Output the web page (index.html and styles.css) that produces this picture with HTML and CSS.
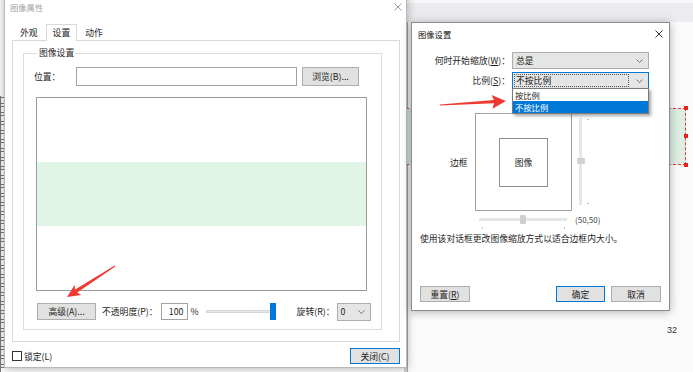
FILE: index.html
```html
<!DOCTYPE html>
<html lang="zh-CN">
<head>
<meta charset="utf-8">
<title>图像属性</title>
<link rel="stylesheet" href="styles.css">
</head>
<body>
<div class="desk">
  <div class="strip"></div>

  <div class="doc">
    <div class="doc-top"></div>
    <div class="doc-page">
      <div class="annot"><i class="hd hd1"></i><i class="hd hd2"></i><i class="hd hd3"></i></div>
      <span class="pno">32</span>
    </div>
  </div>

  <div class="win win-props">
    <div class="titlebar tb-props">
      <span class="ttl ttl-inactive">图像属性</span>
      <svg class="xbtn" width="8" height="8" viewBox="0 0 8 8"><path d="M0.5 0.5L7.5 7.5M7.5 0.5L0.5 7.5" stroke="#9a9a9a" stroke-width="1"/></svg>
    </div>
    <div class="tabs">
      <span class="tab">外观</span>
      <span class="tab sel">设置</span>
      <span class="tab">动作</span>
    </div>
    <div class="panel">
      <div class="group">
        <span class="legend">图像设置</span>
        <div class="row loc">
          <span class="lbl loc-lbl">位置：</span>
          <span class="input wide"></span>
          <span class="btn browse">浏览(B)...</span>
        </div>
        <div class="preview"><div class="band"></div></div>
        <div class="row ctrl">
          <span class="btn adv">高级(A)...</span>
          <span class="lbl op">不透明度(P)：</span>
          <span class="input num">100</span>
          <span class="pct">%</span>
          <span class="slider"><i class="s-track"></i><i class="s-thumb"></i></span>
          <span class="lbl rot">旋转(R)：</span>
          <span class="combo small"><span class="val">0</span><svg width="7" height="4" viewBox="0 0 7 4"><path d="M0.5 0.5L3.5 3.5L6.5 0.5" fill="none" stroke="#777" stroke-width="1"/></svg></span>
        </div>
      </div>
    </div>
    <div class="foot">
      <span class="chk"><i class="box"></i>锁定(L)</span>
      <span class="btn def close">关闭(C)</span>
    </div>
  </div>

  <div class="win win-scale">
    <div class="titlebar tb-scale">
      <span class="ttl">图像设置</span>
      <svg class="xbtn" width="8" height="8" viewBox="0 0 8 8"><path d="M0.5 0.5L7.5 7.5M7.5 0.5L0.5 7.5" stroke="#333" stroke-width="1"/></svg>
    </div>
    <div class="form">
      <span class="flbl">何时开始缩放(<u>W</u>)：</span>
      <span class="combo"><span class="val">总是</span><svg width="7" height="4" viewBox="0 0 7 4"><path d="M0.5 0.5L3.5 3.5L6.5 0.5" fill="none" stroke="#777" stroke-width="1"/></svg></span>
      <span class="flbl">比例(<u>S</u>)：</span>
      <span class="combo focus"><span class="val dotted">不按比例</span><svg width="7" height="4" viewBox="0 0 7 4"><path d="M0.5 0.5L3.5 3.5L6.5 0.5" fill="none" stroke="#777" stroke-width="1"/></svg></span>
    </div>
    <div class="droplist">
      <div class="opt">按比例</div>
      <div class="opt on">不按比例</div>
    </div>
    <div class="frame-row">
      <span class="frame-lbl">边框</span>
      <div class="frame"><div class="image">图像</div></div>
      <div class="vslider"><i class="v-track"></i><i class="v-thumb"></i><i class="v-tick t1"></i><i class="v-tick t2"></i></div>
    </div>
    <div class="hrow">
      <div class="hslider"><i class="h-track"></i><i class="h-thumb"></i><i class="h-tick k1"></i><i class="h-tick k2"></i></div>
      <span class="coord">(50,50)</span>
    </div>
    <p class="desc">使用该对话框更改图像缩放方式以适合边框内大小。</p>
    <div class="btnrow">
      <span class="btn reset">重置(<u>R</u>)</span>
      <span class="spacer"></span>
      <span class="btn def ok">确定</span>
      <span class="btn cancel">取消</span>
    </div>
  </div>

  <svg class="arrows" width="693" height="372" viewBox="0 0 693 372">
    <polygon fill="#ee3a32" points="114.7,265.6 75.2,289.5 74.6,284.9 67,297 81.2,295 77.2,292.5 115.3,266.4"/>
    <polygon fill="#ee3a32" points="440,104.4 493.9,100.1 491.6,94.9 506,101 492.4,108.8 494.1,103.3 440,105.6"/>
  </svg>
</div>
</body>
</html>
```

FILE: styles.css
```css
* { box-sizing: border-box; }

body {
  margin: 0;
  font-family: "Noto Sans CJK SC", "Microsoft YaHei", sans-serif;
  font-size: 8.8px;
  color: #1e1e1e;
}

.desk {
  position: relative;
  width: 693px;
  height: 372px;
  overflow: hidden;
  background: #fff;
}

/* background pieces */
.strip {
  position: absolute;
  left: 0;
  top: 96px;
  bottom: 0;
  width: 4px;
  background:
    linear-gradient(#7a7a7a, #7a7a7a) 0 0 / 1px 100% no-repeat,
    repeating-linear-gradient(to bottom, transparent 0 1px, #7a7a7a 1px 2px, transparent 2px 7px, #7a7a7a 7px 8px, transparent 8px 9px);
}

.doc {
  position: absolute;
  left: 404px;
  top: 0;
  right: 0;
  bottom: 0;
  display: flex;
  flex-direction: column;
  background: #d2d2d2;
}

.doc-top {
  height: 22px;
  background: linear-gradient(#f8f8fa 0 3px, #ececf0 3px);
}

.doc-page {
  position: relative;
  flex: 1;
  margin-left: 3px;
  border-left: 1px solid #a8a8a8;
  background: #fbfbfb;
}

.annot {
  position: absolute;
  left: -2px;
  top: 86px;
  width: 280px;
  height: 57px;
  background: #dcefe1;
  border: 1px dashed #e23a36;
}

.hd {
  position: absolute;
  right: -3px;
  width: 4px;
  height: 4px;
  background: #e8211d;
}
.hd1 { top: -3px; }
.hd2 { top: 25px; }
.hd3 { bottom: -3px; }

.pno {
  position: absolute;
  left: 259px;
  top: 302px;
  font-family: "Liberation Sans", sans-serif;
  font-size: 9px;
  line-height: 12px;
  color: #333;
}

/* windows */
.win {
  position: absolute;
  display: flex;
  flex-direction: column;
  background: #fff;
  border: 1px solid #b9b9b9;
  box-shadow: 0 1px 9px rgba(0, 0, 0, 0.3);
}

.win-props {
  left: 4px;
  top: -6px;
  width: 403px;
  height: 374px;
}

.win-scale {
  left: 411px;
  top: 22px;
  width: 259px;
  height: 289px;
  border-color: #8c8c8c;
}

.titlebar {
  display: flex;
  align-items: center;
  justify-content: space-between;
  flex: none;
}

.tb-props { height: 24px; padding: 0 4px 0 5px; }
.tb-scale { height: 21px; padding: 0 6px 0 6px; }

.ttl { font-size: 8.3px; color: #111; }
.ttl-inactive { color: #a3a3a3; }

.xbtn { display: block; }

/* tabs */
.tabs {
  position: relative;
  z-index: 1;
  height: 21px;
  display: flex;
  align-items: flex-end;
  gap: 2px;
  padding-left: 9px;
  flex: none;
}

.tab {
  height: 14px;
  line-height: 14px;
  padding: 0 6px;
}

.tab.sel {
  height: 17px;
  line-height: 16px;
  margin-bottom: -1px;
  background: #fff;
  border: 1px solid #d9d9d9;
  border-bottom: none;
}

.panel {
  height: 302px;
  margin: 0 6px 0 7px;
  border: 1px solid #d9d9d9;
  flex: none;
}

.group {
  margin: 12px 17px 0 10px;
  padding: 0 0 9px 10px;
  border: 1px solid #dcdcdc;
}

.legend {
  display: block;
  width: fit-content;
  margin: -7px 0 0 3px;
  padding: 0 2px;
  line-height: 12px;
  background: #fff;
}

.row {
  display: flex;
  align-items: center;
}

.loc { margin-top: 8px; height: 19px; }
.loc-lbl { width: 42px; }

.input {
  display: block;
  background: #fff;
  border: 1px solid #a3a3a3;
}

.wide { width: 221px; height: 19px; }

.btn {
  display: flex;
  align-items: center;
  justify-content: center;
  background: #e1e1e1;
  border: 1px solid #adadad;
  white-space: nowrap;
}

.btn.def { border-color: #0078d7; }

.browse { margin-left: 5px; width: 57px; height: 19px; }

.preview {
  margin: 11px 0 0 2px;
  width: 331px;
  height: 194px;
  border: 1px solid #9a9a9a;
}

.band {
  margin-top: 64px;
  height: 64px;
  background: #e1f5e7;
}

.ctrl { margin-top: 12px; height: 17px; }

.adv { margin-left: 3px; width: 59px; height: 17px; }
.op { margin-left: 6px; }

.num {
  margin-left: 3px;
  width: 27px;
  height: 17px;
  line-height: 15px;
  text-align: right;
  padding-right: 3px;
}

.pct { margin-left: 3px; }

.slider {
  position: relative;
  margin-left: 7px;
  width: 70px;
  height: 17px;
}

.s-track {
  position: absolute;
  left: 0;
  right: 2px;
  top: 7px;
  height: 3px;
  background: #e7e7e7;
  border: 1px solid #d6d6d6;
}

.s-thumb {
  position: absolute;
  right: 0;
  top: 0;
  width: 6px;
  height: 17px;
  background: #0078d7;
}

.rot { margin-left: 21px; }

.combo {
  display: flex;
  align-items: center;
  justify-content: space-between;
  height: 17px;
  padding: 0 5px 0 3px;
  background: #e5e5e5;
  border: 1px solid #adadad;
}

.combo svg { display: block; flex: none; }

.combo.small { margin-left: 2px; width: 34px; height: 18px; }

.combo.focus { border-color: #0078d7; padding-left: 1px; }

.val.dotted {
  flex: 1;
  height: 13px;
  line-height: 11px;
  margin-right: 7px;
  padding-left: 1px;
  border: 1px dotted #555;
}

.foot {
  display: flex;
  align-items: center;
  justify-content: space-between;
  margin-top: 6px;
  height: 16px;
  padding: 0 6px 0 7px;
  flex: none;
}

.chk { display: flex; align-items: center; }

.box {
  display: block;
  width: 10px;
  height: 10px;
  margin-right: 2px;
  border: 1px solid #333;
  background: #fff;
}

.close { width: 50px; height: 16px; }

/* image settings dialog */
.form {
  display: grid;
  grid-template-columns: 98px 137px;
  grid-auto-rows: 17px;
  column-gap: 2px;
  row-gap: 3px;
  margin-top: 8px;
}

.flbl {
  text-align: right;
  line-height: 17px;
  white-space: nowrap;
}

.droplist {
  position: absolute;
  left: 100px;
  top: 65px;
  width: 137px;
  height: 26px;
  background: #fff;
  border: 1px solid #7a7a7a;
  box-shadow: 2px 2px 3px rgba(0, 0, 0, 0.35);
}

.opt {
  height: 12px;
  line-height: 12px;
  padding-left: 2px;
  font-size: 8.3px;
  overflow: hidden;
}

.opt.on {
  background: #0078d7;
  color: #fff;
}

.frame-row {
  display: flex;
  align-items: center;
  margin-top: 24px;
}

.frame-lbl { margin-left: 38px; width: 18px; white-space: nowrap; }

.frame {
  margin-left: 7px;
  width: 97px;
  height: 98px;
  display: flex;
  align-items: center;
  justify-content: center;
  border: 1px solid #a0a0a0;
}

.image {
  width: 49px;
  height: 49px;
  display: flex;
  align-items: center;
  justify-content: center;
  border: 1px solid #8e8e8e;
}

.vslider {
  position: relative;
  margin-left: 5px;
  width: 12px;
  height: 98px;
}

.v-track {
  position: absolute;
  left: 2px;
  top: 5px;
  width: 3px;
  height: 87px;
  background: #e6e6e6;
}

.v-thumb {
  position: absolute;
  left: 0;
  top: 45px;
  width: 8px;
  height: 6px;
  border-radius: 1px;
  background: #d2d2d2;
}

.v-tick {
  position: absolute;
  left: 10px;
  width: 2px;
  height: 1px;
  background: #bdbdbd;
}
.t1 { top: 6px; }
.t2 { top: 90px; }

.hrow {
  display: flex;
  align-items: flex-start;
  margin-top: 3px;
  height: 15px;
}

.hslider {
  position: relative;
  margin-left: 67px;
  width: 88px;
  height: 15px;
}

.h-track {
  position: absolute;
  left: 0;
  right: 0;
  top: 4px;
  height: 3px;
  background: #e6e6e6;
}

.h-thumb {
  position: absolute;
  left: 41px;
  top: 1px;
  width: 6px;
  height: 9px;
  border-radius: 1px;
  background: #cfcfcf;
}

.h-tick {
  position: absolute;
  top: 13px;
  width: 1px;
  height: 2px;
  background: #c4c4c4;
}
.k1 { left: 3px; }
.k2 { left: 85px; }

.coord {
  margin-left: 8px;
  font-size: 8px;
  line-height: 12px;
  color: #444;
}

.desc {
  margin: 4px 0 0;
  padding-left: 8px;
  line-height: 12px;
}

.btnrow {
  display: flex;
  margin-top: auto;
  padding: 0 8px 8px;
  height: 24px;
}

.btnrow .btn { height: 16px; }
.reset { width: 50px; }
.spacer { flex: 1; }
.ok { width: 49px; }
.cancel { width: 50px; margin-left: 6px; }

u { text-decoration-thickness: 1px; text-underline-offset: 1px; }

.arrows {
  position: absolute;
  left: 0;
  top: 0;
  pointer-events: none;
}
```
